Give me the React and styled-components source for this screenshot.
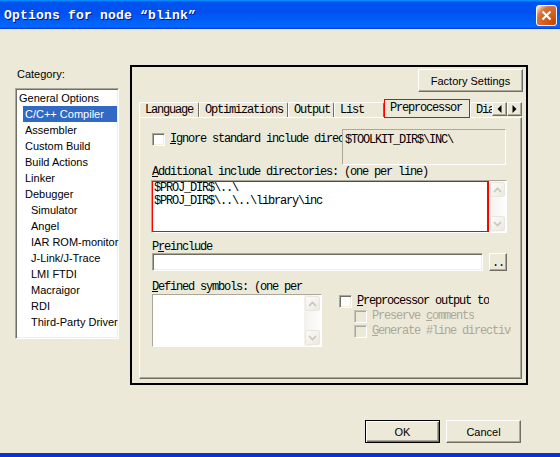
import React from "react";
import styled, { createGlobalStyle, css } from "styled-components";

const GlobalStyle = createGlobalStyle`
  html, body {
    margin: 0;
    padding: 0;
    background: #ece9d8;
  }
  * {
    box-sizing: border-box;
  }
`;

const mono = css`
  font-family: "Liberation Mono", "DejaVu Sans Mono", monospace;
  font-size: 12px;
  letter-spacing: -1.2px;
`;

const sans = css`
  font-family: "Liberation Sans", Arial, sans-serif;
  font-size: 11px;
`;

const raised = css`
  background: #ece9d8;
  border: 1px solid;
  border-color: #fff #716f64 #716f64 #fff;
  box-shadow: inset -1px -1px 0 #aca899;
`;

const sunken = css`
  border: 1px solid;
  border-color: #aca899 #fff #fff #aca899;
  box-shadow: inset 1px 1px 0 #716f64, inset -1px -1px 0 #f1efe2;
`;

const Window = styled.div`
  width: 560px;
  height: 457px;
  display: flex;
  flex-direction: column;
  background: #ece9d8;
  border-bottom: 4px solid #0831d9;
  overflow: hidden;
`;

const TitleBar = styled.div`
  height: 29px;
  flex: none;
  display: flex;
  align-items: center;
  justify-content: space-between;
  padding: 2px 3px 0 4px;
  background: linear-gradient(
    to bottom,
    #0997ff 0%,
    #0053ee 8%,
    #0050ee 40%,
    #0066ff 88%,
    #0066ff 93%,
    #005bff 95%,
    #003dd7 96%,
    #003dd7 100%
  );
`;

const Title = styled.span`
  font-family: "Liberation Mono", monospace;
  font-weight: bold;
  font-size: 13px;
  letter-spacing: 0.2px;
  color: #fff;
  text-shadow: 1px 1px #0f1089;
  white-space: nowrap;
`;

const CloseButton = styled.div`
  width: 21px;
  height: 21px;
  border: 1px solid #fff;
  border-radius: 3px;
  display: flex;
  align-items: center;
  justify-content: center;
  background: radial-gradient(
    circle at 90% 90%,
    #cc4600 0%,
    #dc6527 55%,
    #cd7546 70%,
    #ffccb2 90%,
    #fff 100%
  );
`;

const Body = styled.div`
  flex: 1;
  display: flex;
  flex-direction: column;
  padding: 36px 32px 0 15px;
`;

const MainRow = styled.div`
  display: flex;
  align-items: flex-start;
  gap: 11px;
`;

const CategoryColumn = styled.div`
  width: 104px;
  display: flex;
  flex-direction: column;
`;

const CategoryLabel = styled.div`
  ${sans};
  color: #000;
  line-height: 14px;
  margin: 2px 0 0 2px;
`;

const CategoryList = styled.div`
  ${sunken};
  margin-top: 7px;
  height: 251px;
  background: #fff;
  padding: 1px;
`;

const CategoryItem = styled.div`
  ${sans};
  height: 16px;
  line-height: 16px;
  margin-left: ${(p) => p.$level * 6}px;
  padding-left: 2px;
  white-space: nowrap;
  color: ${(p) => (p.$selected ? "#fff" : "#000")};
  background: ${(p) => (p.$selected ? "#316ac5" : "transparent")};
`;

const Panel = styled.div`
  width: 398px;
  height: 320px;
  border: 2px solid #000;
  display: flex;
  flex-direction: column;
  padding: 0 4px 0 7px;
`;

const PanelHeader = styled.div`
  display: flex;
  justify-content: flex-end;
  margin: 2px -1px 0 0;
`;

const PushButton = styled.div`
  ${sans};
  ${raised};
  color: #000;
  width: ${(p) => p.$width}px;
  height: 23px;
  display: flex;
  align-items: center;
  justify-content: center;
  ${(p) =>
    p.$default &&
    css`
      border: 1px solid #000;
      box-shadow: inset 1px 1px 0 #fff, inset -1px -1px 0 #716f64,
        inset -2px -2px 0 #aca899;
    `}
`;

const TabStrip = styled.div`
  position: relative;
  z-index: 2;
  height: 19px;
  margin-top: 7px;
  display: flex;
  align-items: flex-start;
`;

const Tab = styled.div`
  ${mono};
  flex: none;
  color: #000;
  width: ${(p) => p.$width}px;
  height: 15px;
  margin-top: 3px;
  padding: 1px 0 0 5px;
  line-height: 13px;
  white-space: nowrap;
  overflow: hidden;
  background: #ece9d8;
  border-top: 1px solid #fff;
  border-left: 1px solid #fff;
  border-right: ${(p) => (p.$clipped ? "none" : "1px solid #716f64")};
  border-top-left-radius: 2px;
  border-top-right-radius: ${(p) => (p.$clipped ? "0" : "2px")};
  ${(p) =>
    p.$active &&
    css`
      height: 19px;
      margin-top: 0;
      padding-top: 2px;
      border: 1px solid #f00;
      border-radius: 0;
    `}
`;

const TabArrows = styled.div`
  display: flex;
  margin: 3px 0 0 auto;
`;

const TabArrow = styled.div`
  ${raised};
  flex: none;
  width: 15px;
  height: 14px;
  display: flex;
  align-items: center;
  justify-content: center;
`;

const Page = styled.div`
  height: 262px;
  margin-top: -1px;
  border-top: 1px solid #fff;
  border-left: 1px solid #fff;
  border-right: 1px solid #716f64;
  border-bottom: 1px solid #716f64;
  box-shadow: inset -1px -1px 0 #aca899;
  padding: 11px 0 0 12px;
  display: flex;
  flex-direction: column;
`;

const TopRow = styled.div`
  display: flex;
  height: 36px;
`;

const CheckRow = styled.div`
  display: flex;
  align-items: center;
  height: ${(p) => p.$height || 15}px;
  margin-top: ${(p) => p.$mt || 0}px;
  padding-left: ${(p) => p.$indent || 0}px;
`;

const Checkbox = styled.span`
  flex: none;
  width: 13px;
  height: 13px;
  background: ${(p) => (p.$disabled ? "#ece9d8" : "#fff")};
  border: 1px solid;
  border-color: ${(p) =>
    p.$disabled ? "#c7c4b6 #fff #fff #c7c4b6" : "#aca899 #fff #fff #aca899"};
  box-shadow: ${(p) =>
    p.$disabled
      ? "inset 1px 1px 0 #aca899"
      : "inset 1px 1px 0 #716f64, inset -1px -1px 0 #f1efe2"};
`;

const CheckText = styled.span`
  ${mono};
  color: ${(p) => (p.$disabled ? "#aca899" : "#000")};
  margin-left: 5px;
  line-height: 13px;
  white-space: nowrap;
  overflow: hidden;
  ${(p) => p.$width && `width: ${p.$width}px;`}
`;

const StaticBox = styled.div`
  ${mono};
  color: #000;
  width: 164px;
  height: 36px;
  border: 1px solid;
  border-color: #aca899 #fff #fff #aca899;
  padding: 4px 0 0 2px;
  line-height: 12px;
  white-space: nowrap;
`;

const FieldLabel = styled.div`
  ${mono};
  color: #000;
  line-height: 12px;
  margin-top: ${(p) => p.$mt || 0}px;
  white-space: nowrap;
`;

const EditFrame = styled.div`
  width: ${(p) => p.$width}px;
  height: 53px;
  margin-top: ${(p) => p.$mt || 0}px;
  margin-left: ${(p) => p.$ml || 0}px;
  border: 1px solid;
  border-color: #aca899 #fff #fff #aca899;
  display: flex;
  background: #fff;
`;

const EditArea = styled.div`
  ${mono};
  color: #000;
  flex: 1;
  line-height: 13px;
  padding: 0 1px;
  white-space: pre;
  border: ${(p) => (p.$focus ? "1px solid #f00" : "none")};
  border-right-width: ${(p) => (p.$focus ? "2px" : "0")};
`;

const ScrollBar = styled.div`
  width: 17px;
  flex: none;
  display: flex;
  flex-direction: column;
  justify-content: space-between;
  padding: 1px;
  background: linear-gradient(to right, #f3f1ec, #fefefe);
`;

const ScrollButton = styled.div`
  width: 15px;
  height: 15px;
  border: 1px solid #e9e7dd;
  border-radius: 2px;
  display: flex;
  align-items: center;
  justify-content: center;
  background: linear-gradient(to bottom right, #fbfbf8, #ebe9e0);
`;

const InputRow = styled.div`
  display: flex;
  gap: 6px;
  height: 18px;
`;

const InputBox = styled.div`
  ${sunken};
  width: 331px;
  height: 18px;
  background: #fff;
`;

const BrowseButton = styled.div`
  ${mono};
  ${raised};
  color: #000;
  width: 18px;
  height: 18px;
  display: flex;
  align-items: flex-end;
  justify-content: center;
  padding-bottom: 3px;
  line-height: 8px;
`;

const BottomGrid = styled.div`
  display: grid;
  grid-template-columns: 187px 1fr;
  margin-top: 10px;
`;

const Column = styled.div`
  display: flex;
  flex-direction: column;
  padding-top: ${(p) => p.$pt || 0}px;
`;

const Footer = styled.div`
  display: flex;
  justify-content: flex-end;
  gap: 6px;
  margin-top: 35px;
  padding-right: 7px;
`;

const categories = [
  ["General Options", 0],
  ["C/C++ Compiler", 1],
  ["Assembler", 1],
  ["Custom Build", 1],
  ["Build Actions", 1],
  ["Linker", 1],
  ["Debugger", 1],
  ["Simulator", 2],
  ["Angel", 2],
  ["IAR ROM-monitor", 2],
  ["J-Link/J-Trace", 2],
  ["LMI FTDI", 2],
  ["Macraigor", 2],
  ["RDI", 2],
  ["Third-Party Driver", 2],
];

// the last tab is cut off by the scroll arrows
const tabs = [
  ["Language", 60],
  ["Optimizations", 89],
  ["Output", 46],
  ["List", 50],
  ["Preprocessor", 86],
  ["Diagnostics", 22],
];

const Chevron = ({ up }) => (
  <svg width="9" height="6" viewBox="0 0 9 6">
    <path
      d={up ? "M1 5 L4.5 1.5 L8 5" : "M1 1 L4.5 4.5 L8 1"}
      fill="none"
      stroke="#c9c6b8"
      strokeWidth="1.6"
    />
  </svg>
);

const Scroller = () => (
  <ScrollBar>
    <ScrollButton>
      <Chevron up />
    </ScrollButton>
    <ScrollButton>
      <Chevron />
    </ScrollButton>
  </ScrollBar>
);

const Triangle = ({ left }) => (
  <svg width="5" height="8" viewBox="0 0 5 8">
    <path d={left ? "M4.5 0 L0.5 4 L4.5 8 Z" : "M0.5 0 L4.5 4 L0.5 8 Z"} fill="#000" />
  </svg>
);

const App = () => {
  return (
    <>
      <GlobalStyle />
      <Window>
        <TitleBar>
          <Title>Options for node “blink”</Title>
          <CloseButton>
            <svg width="11" height="11" viewBox="0 0 11 11">
              <path d="M1.5 1.5 L9.5 9.5 M9.5 1.5 L1.5 9.5" stroke="#fff" strokeWidth="2" />
            </svg>
          </CloseButton>
        </TitleBar>
        <Body>
          <MainRow>
            <CategoryColumn>
              <CategoryLabel>Category:</CategoryLabel>
              <CategoryList>
                {categories.map(([name, level], i) => (
                  <CategoryItem key={name} $level={level} $selected={i === 1}>
                    {name}
                  </CategoryItem>
                ))}
              </CategoryList>
            </CategoryColumn>
            <Panel>
              <PanelHeader>
                <PushButton $width={105}>Factory Settings</PushButton>
              </PanelHeader>
              <TabStrip>
                {tabs.map(([name, width], i) => (
                  <Tab
                    key={name}
                    $width={width}
                    $active={name === "Preprocessor"}
                    $clipped={i === tabs.length - 1}
                  >
                    {name}
                  </Tab>
                ))}
                <TabArrows>
                  <TabArrow>
                    <Triangle left />
                  </TabArrow>
                  <TabArrow>
                    <Triangle />
                  </TabArrow>
                </TabArrows>
              </TabStrip>
              <Page>
                <TopRow>
                  <CheckRow $height={13} $mt={4}>
                    <Checkbox />
                    <CheckText $width={172}>
                      <u>I</u>gnore standard include directories
                    </CheckText>
                  </CheckRow>
                  <StaticBox>$TOOLKIT_DIR$\INC\</StaticBox>
                </TopRow>
                <FieldLabel $mt={1}>
                  <u>A</u>dditional include directories: (one per line)
                </FieldLabel>
                <EditFrame $width={356} $mt={2} $ml={-1}>
                  <EditArea $focus>
                    {"$PROJ_DIR$\\..\\\n$PROJ_DIR$\\..\\..\\library\\inc"}
                  </EditArea>
                  <Scroller />
                </EditFrame>
                <FieldLabel $mt={8}>
                  P<u>r</u>einclude
                </FieldLabel>
                <InputRow>
                  <InputBox />
                  <BrowseButton>..</BrowseButton>
                </InputRow>
                <BottomGrid>
                  <Column>
                    <FieldLabel>
                      <u>D</u>efined symbols: (one per
                    </FieldLabel>
                    <EditFrame $width={170} $mt={1}>
                      <EditArea />
                      <Scroller />
                    </EditFrame>
                  </Column>
                  <Column $pt={13}>
                    <CheckRow>
                      <Checkbox />
                      <CheckText>
                        <u>P</u>reprocessor output to
                      </CheckText>
                    </CheckRow>
                    <CheckRow $indent={15}>
                      <Checkbox $disabled />
                      <CheckText $disabled>
                        Preserve <u>c</u>omments
                      </CheckText>
                    </CheckRow>
                    <CheckRow $indent={15}>
                      <Checkbox $disabled />
                      <CheckText $disabled $width={139}>
                        <u>G</u>enerate #line directives
                      </CheckText>
                    </CheckRow>
                  </Column>
                </BottomGrid>
              </Page>
            </Panel>
          </MainRow>
          <Footer>
            <PushButton $width={75} $default>
              OK
            </PushButton>
            <PushButton $width={75}>Cancel</PushButton>
          </Footer>
        </Body>
      </Window>
    </>
  );
};

export default App;
